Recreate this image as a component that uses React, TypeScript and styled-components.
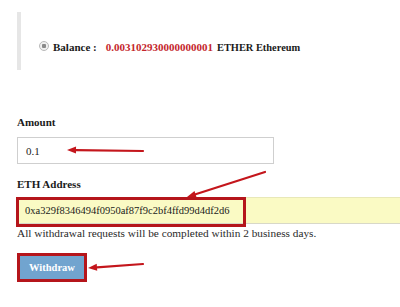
import React from "react";
import styled, {createGlobalStyle} from "styled-components";

const serif = `"Liberation Serif", "Times New Roman", Times, serif`;

const GlobalStyle = createGlobalStyle`
    html, body {
        margin: 0;
        padding: 0;
        background: #ffffff;
    }
`;

const Page = styled.div`
    position: relative;
    width: 400px;
    height: 307px;
    overflow: hidden;
    padding: 12px 0 0 17px;
    box-sizing: border-box;
    font-family: ${serif};
    color: #222;
`;

const BalanceBox = styled.div`
    display: flex;
    align-items: center;
    height: 58px;
    box-sizing: border-box;
    padding-top: 12px;
    border-left: 4px solid #e6e6e6;
    padding-left: 18px;
    font-size: 11px;
    font-weight: bold;
    color: #1a1a1a;
`;

const Radio = styled.span`
    width: 8px;
    height: 8px;
    border-radius: 50%;
    border: 1px solid #b9b9b9;
    background: radial-gradient(circle, #8a8a8a 0 2px, #f0f0f0 2.5px);
    margin-right: 4px;
    margin-top: -3px;
`;

const Amount = styled.span`
    color: #c4262c;
    margin-left: 9px;
    margin-right: 4px;
`;

const Unit = styled.span`
    font-size: 10.4px;
`;

const Form = styled.div`
    margin-top: 46px;
    display: flex;
    flex-direction: column;
`;

const Label = styled.label<{gap: number}>`
    font-size: 11px;
    font-weight: bold;
    color: #1a1a1a;
    margin-bottom: ${(p) => p.gap}px;
`;

const TextBox = styled.div`
    width: 257px;
    height: 27px;
    box-sizing: border-box;
    border: 1px solid #cfcfcf;
    display: flex;
    align-items: center;
    padding-left: 8px;
    font-size: 11px;
    margin-bottom: 14px;
`;

const AddressBox = styled.div`
    position: relative;
    width: 400px;
    height: 27px;
    box-sizing: border-box;
    background: #fafac4;
    border-top: 1px solid #e8e8b8;
    border-bottom: 1px solid #d8d8c8;
    display: flex;
    align-items: center;
    padding-left: 8px;
    font-size: 10.5px;
    color: #1a1a1a;
`;

const Highlight = styled.div`
    position: absolute;
    left: -1px;
    top: -1px;
    width: 230px;
    height: 30px;
    box-sizing: border-box;
    border: 3px solid #b5151b;
`;

const Help = styled.p`
    margin: 3px 0 0 0;
    font-size: 11.3px;
    color: #2a2a2a;
`;

const Button = styled.button`
    margin-top: 14px;
    width: 70px;
    height: 29px;
    box-sizing: border-box;
    background: #71a4cf;
    border: 3px solid #b5151b;
    color: #ffffff;
    font-family: ${serif};
    font-size: 10.5px;
    font-weight: bold;
    padding: 0;
`;

const Arrows = styled.svg`
    position: absolute;
    left: 0;
    top: 0;
    pointer-events: none;
`;

const Arrow = ({x1, y1, x2, y2}: {x1: number; y1: number; x2: number; y2: number}) => {
    const a = Math.atan2(y2 - y1, x2 - x1);
    const len = 9;
    const w = 3.5;
    const bx = x2 - Math.cos(a) * len;
    const by = y2 - Math.sin(a) * len;
    const px = -Math.sin(a) * w;
    const py = Math.cos(a) * w;
    return (
        <g>
            <line x1={x1} y1={y1} x2={bx} y2={by} stroke="#c4161c" strokeWidth={2.2} strokeLinecap="round"/>
            <polygon points={`${x2},${y2} ${bx + px},${by + py} ${bx - px},${by - py}`} fill="#c4161c"/>
        </g>
    );
};

const App = () => {
    return (
        <Page>
            <GlobalStyle/>
            <BalanceBox>
                <Radio/>
                <span>Balance :</span>
                <Amount>0.003102930000000001</Amount>
                <Unit>ETHER Ethereum</Unit>
            </BalanceBox>
            <Form>
                <Label gap={9}>Amount</Label>
                <TextBox>0.1</TextBox>
                <Label gap={7}>ETH Address</Label>
                <AddressBox>
                    0xa329f8346494f0950af87f9c2bf4ffd99d4df2d6
                    <Highlight/>
                </AddressBox>
                <Help>All withdrawal requests will be completed within 2 business days.</Help>
                <div>
                    <Button>Withdraw</Button>
                </div>
            </Form>
            <Arrows width={400} height={307}>
                <Arrow x1={143} y1={151} x2={67} y2={150}/>
                <Arrow x1={265} y1={172} x2={187} y2={197}/>
                <Arrow x1={143} y1={264} x2={88} y2={268}/>
            </Arrows>
        </Page>
    );
};

export default App;
